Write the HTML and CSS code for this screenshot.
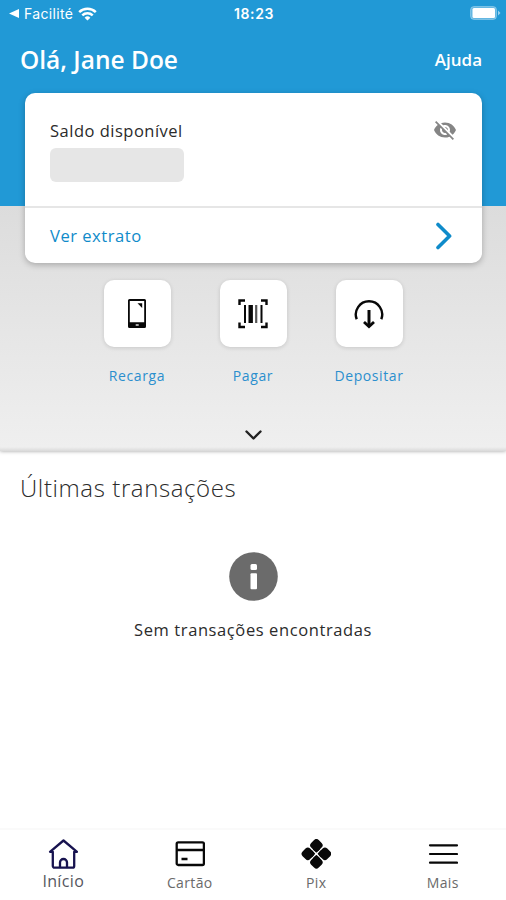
FILE: index.html
```html
<!DOCTYPE html>
<html lang="pt-BR">
<head>
<meta charset="utf-8">
<title>Início</title>
<link rel="stylesheet" href="styles.css">
</head>
<body>
<div class="app">
  <section class="top">
    <div class="status">
      <div class="status-left">
        <svg width="10" height="9" viewBox="0 0 10 9"><path d="M0 4.500 10 0v9z" fill="#fff"/></svg>
        <span class="back">Facilité</span>
        <svg width="19" height="14" viewBox="0 0 19 14" fill="none" stroke="#fff" stroke-width="2.500"><path d="M1.200 5.200a11.800 11.800 0 0 1 16.600 0M4.300 8.400a7.400 7.400 0 0 1 10.400 0"/><path d="M6.600 10.700a4.100 4.100 0 0 1 5.800 0L9.500 13.600z" fill="#fff" stroke="none"/></svg>
      </div>
      <span class="clock">18:23</span>
      <svg class="battery" width="31" height="14" viewBox="0 0 31 14"><rect x=".5" y=".5" width="26" height="13" rx="3.500" fill="#fff" fill-opacity=".3" stroke="#fff" stroke-opacity=".3"/><rect x="2.500" y="2" width="22.500" height="10" rx="1.500" fill="#fff"/><path d="M28 4.500 30.500 7 28 9.500z" fill="#fff" fill-opacity=".55"/></svg>
    </div>
    <header class="greeting">
      <h1>Olá, Jane Doe</h1>
      <a class="help">Ajuda</a>
    </header>
    <article class="card">
      <div class="balance">
        <div>
          <p class="balance-label">Saldo disponível</p>
          <div class="balance-mask"></div>
        </div>
        <svg class="eye" width="24" height="24" viewBox="0 0 24 24" fill="#858585"><path d="M12 7c2.760 0 5 2.240 5 5 0 .65-.13 1.260-.36 1.830l2.920 2.920c1.510-1.260 2.700-2.890 3.430-4.750-1.730-4.390-6-7.500-11-7.500-1.400 0-2.740.25-3.980.7l2.160 2.160C10.740 7.130 11.350 7 12 7zM2 4.270l2.280 2.280.46.46C3.080 8.300 1.780 10.020 1 12c1.730 4.390 6 7.500 11 7.500 1.550 0 3.030-.3 4.380-.84l.42.42L19.730 22 21 20.730 3.270 3 2 4.270zM7.530 9.800l1.550 1.550c-.05.21-.08.43-.08.65 0 1.660 1.340 3 3 3 .22 0 .44-.03.65-.08l1.550 1.550c-.67.33-1.410.53-2.200.53-2.760 0-5-2.240-5-5 0-.79.2-1.530.53-2.200zm4.310-.78 3.150 3.150.02-.16c0-1.660-1.340-3-3-3l-.17.01z"/></svg>
      </div>
      <a class="statement">
        <span>Ver extrato</span>
        <svg width="16" height="28" viewBox="0 0 16 28" fill="none" stroke="#0f8bca" stroke-width="3.600" stroke-linecap="round" stroke-linejoin="round"><path d="M2 2.500 13.600 14 2 25.500"/></svg>
      </a>
    </article>
    <nav class="actions">
      <a class="action">
        <span class="tile"><svg width="30" height="30" viewBox="0 0 30 30"><path d="M7.500 0h15A1.500 1.500 0 0 1 24 1.500v26a1.500 1.500 0 0 1-1.500 1.500h-15A1.500 1.500 0 0 1 6 27.500v-26A1.500 1.500 0 0 1 7.500 0zM7.800 2v21.200h14.400V2z" fill="#080808" fill-rule="evenodd"/><path d="M15.500 4.300h4.700V9z" fill="#080808"/><path d="M13.700 26h3" stroke="#fff" stroke-width="1.300"/></svg></span>
        <span class="action-label">Recarga</span>
      </a>
      <a class="action">
        <span class="tile"><svg width="30" height="30" viewBox="0 0 30 30" fill="none" stroke="#080808"><path d="M1.500 6V1.500H7M23 1.500h5.500V6M1.500 23.500V28H7M23 28h5.500v-4.500" stroke-width="2.400"/><path d="M7 6v18M23.500 6v18" stroke-width="2"/><path d="M12.700 6v18" stroke-width="4.400"/><path d="M18.200 6v18" stroke-width="2.200" stroke="#555"/></svg></span>
        <span class="action-label">Pagar</span>
      </a>
      <a class="action">
        <span class="tile"><svg width="30" height="30" viewBox="0 0 30 30" fill="none" stroke="#080808"><path d="M2.700 20.300A13.200 13.200 0 1 1 27.300 20.300" stroke-width="2.400"/><path d="M15 11v16" stroke-width="3"/><path d="m10 23 5 4.600 5-4.600" stroke-width="2.800"/></svg></span>
        <span class="action-label">Depositar</span>
      </a>
    </nav>
    <svg class="expand" width="20" height="12" viewBox="0 0 20 12" fill="none" stroke="#222" stroke-width="2.400" stroke-linecap="round" stroke-linejoin="round"><path d="m3.500 2.500 7 7 7-7"/></svg>
  </section>
  <main class="transactions">
    <h2>Últimas transações</h2>
    <div class="empty">
      <svg width="50" height="50" viewBox="0 0 50 50"><circle cx="25.500" cy="25.500" r="24.300" fill="#6b6b6b"/><rect x="22.500" y="13" width="6.500" height="6" rx="1.500" fill="#fff"/><rect x="22.500" y="22.300" width="6.500" height="16" rx="1" fill="#fff"/></svg>
      <p>Sem transações encontradas</p>
    </div>
  </main>
  <nav class="tabs">
    <a class="tab active">
      <svg width="30" height="30" viewBox="0 0 30 30" fill="none" stroke="#17124f" stroke-width="2.300" stroke-linejoin="round" stroke-linecap="round"><path d="M4.800 12.800H2L15.500 1.500 29 12.800H26.200V27a1.700 1.700 0 0 1-1.700 1.700h-18A1.700 1.700 0 0 1 4.800 27z"/><path d="M12 28v-4.500a3.500 3.500 0 0 1 7 0V28"/></svg>
      <span>Início</span>
    </a>
    <a class="tab">
      <svg width="30" height="30" viewBox="0 0 30 30" fill="none" stroke="#080808" stroke-width="2.300"><rect x="1.700" y="3.300" width="27.200" height="22.700" rx="1.500"/><path d="M1.700 11h27M6.500 20h6"/></svg>
      <span>Cartão</span>
    </a>
    <a class="tab">
      <svg width="30" height="30" viewBox="0 0 30 30" fill="#080808"><g transform="translate(.4 -.2) rotate(45 15 15)"><rect x="3.600" y="3.600" width="10.700" height="10.700" rx="3.300"/><rect x="15.700" y="3.600" width="10.700" height="10.700" rx="3.300"/><rect x="3.600" y="15.700" width="10.700" height="10.700" rx="3.300"/><rect x="15.700" y="15.700" width="10.700" height="10.700" rx="3.300"/><rect x="9" y="9" width="5.300" height="5.300" rx=".8"/><rect x="15.700" y="9" width="5.300" height="5.300" rx=".8"/><rect x="9" y="15.700" width="5.300" height="5.300" rx=".8"/><rect x="15.700" y="15.700" width="5.300" height="5.300" rx=".8"/></g></svg>
      <span>Pix</span>
    </a>
    <a class="tab">
      <svg width="30" height="30" viewBox="0 0 30 30" fill="none" stroke="#080808" stroke-width="2.200" stroke-linecap="round"><path d="M2 6.300h27M2 15h27M2 23.700h27"/></svg>
      <span>Mais</span>
    </a>
  </nav>
</div>
</body>
</html>
```
FILE: styles.css
```css
* { box-sizing: border-box; }
body, h1, h2, p { margin: 0; }
body { background: #fff; font-family: "Open Sans", "Noto Sans", sans-serif; color: #2b2b2b; }
svg { display: block; flex: none; }
.app { height: 900px; display: flex; flex-direction: column; overflow: hidden; }

.top {
  height: 451px;
  flex: none;
  display: flex;
  flex-direction: column;
  background: linear-gradient(#2199d6 0 206px, #dcdcdc 206px, #efefef 447px, #dadada 100%);
  box-shadow: 0 0 4px rgba(0, 0, 0, .4);
  z-index: 1;
}
.status {
  height: 27px;
  display: grid;
  grid-template-columns: 1fr auto 1fr;
  align-items: center;
  padding: 0 5px 0 9px;
  color: #fff;
}
.status-left { display: flex; align-items: center; gap: 5px; }
.back { font: 400 14px/20px Inter, sans-serif; letter-spacing: .35px; }
.clock { font: 600 14px/20px Inter, sans-serif; letter-spacing: .6px; margin-right: 2px; }
.battery { justify-self: end; margin-top: -1px; }

.greeting {
  height: 66px;
  padding: 0 24px 0 20px;
  display: flex;
  align-items: center;
  justify-content: space-between;
  color: #fff;
}
h1 { font-size: 24.5px; line-height: 34px; font-weight: 600; }
.help { font-size: 17px; line-height: 24px; font-weight: 600; }

.card {
  height: 170px;
  flex: none;
  margin: 0 24px 0 25px;
  background: #fff;
  border-radius: 10px;
  box-shadow: 0 2px 6px rgba(0, 0, 0, .25);
}
.balance {
  height: 115px;
  padding: 26px 25px 0;
  display: flex;
  justify-content: space-between;
  border-bottom: 2px solid #e6e6e6;
}
.eye { margin-top: -1px; }
.balance-label { font-size: 16.5px; line-height: 24px; letter-spacing: .5px; }
.balance-mask { width: 134px; height: 34px; margin-top: 5px; border-radius: 6px; background: #e6e6e6; }
.statement {
  height: 55px;
  padding: 0 30px 0 25px;
  display: flex;
  align-items: center;
  justify-content: space-between;
  color: #0f8bca;
  font-size: 16.6px;
  letter-spacing: .5px;
}

.actions { display: flex; justify-content: center; gap: 26px; margin-top: 17px; }
.action { width: 90px; display: flex; flex-direction: column; align-items: center; }
.tile {
  width: 67px;
  height: 67px;
  border-radius: 10px;
  background: #fff;
  box-shadow: 0 1px 4px rgba(0, 0, 0, .14);
  display: flex;
  align-items: center;
  justify-content: center;
}
.action-label { margin-top: 19px; font-size: 14px; line-height: 20px; letter-spacing: .6px; color: #2b8fce; }
.expand { align-self: center; margin-top: 43px; }

.transactions { flex: 1; padding: 18px 20px 0; }
h2 { font-size: 24px; line-height: 38px; font-weight: 300; letter-spacing: .6px; }
.empty { display: flex; flex-direction: column; align-items: center; margin-top: 44px; }
.empty p { margin-top: 17px; font-size: 16.5px; line-height: 24px; letter-spacing: .6px; }

.tabs {
  height: 72px;
  flex: none;
  display: flex;
  border-top: 2px solid #fafafa;
}
.tab {
  flex: 1;
  display: flex;
  flex-direction: column;
  align-items: center;
  padding-top: 9px;
  font-size: 14px;
  line-height: 20px;
  letter-spacing: .35px;
  color: #6a6a6a;
}
.tab span { margin-top: 4px; }
.tab.active span { font-size: 16px; margin-top: 2px; color: #55555e; }
```
